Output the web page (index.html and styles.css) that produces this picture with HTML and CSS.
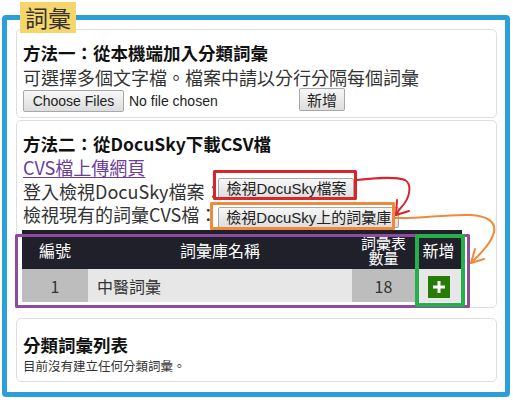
FILE: index.html
```html
<!DOCTYPE html>
<html lang="zh-Hant">
<head>
<meta charset="utf-8">
<title>詞彙</title>
<link rel="stylesheet" href="styles.css">
</head>
<body>
<section class="vocab">
  <h2 class="vocab-label">詞彙</h2>

  <div class="panel panel-local">
    <h3 class="panel-title">方法一：從本機端加入分類詞彙</h3>
    <p class="panel-text">可選擇多個文字檔。檔案中請以分行分隔每個詞彙</p>
    <div class="file-row">
      <span class="file-input">
        <button class="btn btn-file" type="button">Choose Files</button>
        <span class="file-name">No file chosen</span>
      </span>
      <button class="btn btn-add" type="button">新增</button>
    </div>
  </div>

  <div class="panel panel-docusky">
    <h3 class="panel-title">方法二：從DocuSky下載CSV檔</h3>
    <a class="link" href="#">CVS檔上傳網頁</a>
    <div class="action-row row-login">
      <span class="action-label">登入檢視DocuSky檔案：</span>
      <button class="btn btn-small" type="button">檢視DocuSky檔案</button>
    </div>
    <div class="action-row row-view">
      <span class="action-label">檢視現有的詞彙CVS檔：</span>
      <button class="btn btn-small" type="button">檢視DocuSky上的詞彙庫</button>
    </div>
    <table class="lib-table">
      <colgroup>
        <col class="c-num"><col class="c-name"><col class="c-count"><col class="c-add">
      </colgroup>
      <thead>
        <tr>
          <th>編號</th>
          <th>詞彙庫名稱</th>
          <th class="th-count">詞彙表數量</th>
          <th>新增</th>
        </tr>
      </thead>
      <tbody>
        <tr>
          <td class="cell-dark cell-center">1</td>
          <td class="cell-light cell-name">中醫詞彙</td>
          <td class="cell-dark cell-center">18</td>
          <td class="cell-light cell-center">
            <button class="btn-plus" type="button" aria-label="新增">
              <svg width="12" height="12" viewBox="0 0 12 12"><rect x="4.5" y="0" width="3" height="12" fill="#fff"/><rect x="0" y="4.5" width="12" height="3" fill="#fff"/></svg>
            </button>
          </td>
        </tr>
      </tbody>
    </table>
  </div>

  <div class="panel panel-list">
    <h3 class="panel-title">分類詞彙列表</h3>
    <p class="panel-note">目前沒有建立任何分類詞彙。</p>
  </div>
</section>

<svg class="annotations" width="513" height="400" viewBox="0 0 513 400" aria-hidden="true">
  <g fill="none" stroke-linecap="round" stroke-linejoin="round">
    <rect x="214.5" y="171.5" width="141" height="27" stroke="#d9252c" stroke-width="3"/>
    <rect x="211.5" y="203.5" width="182" height="25" stroke="#f08a3a" stroke-width="3"/>
    <rect x="16.5" y="235.5" width="452" height="71" stroke="#8e4c9e" stroke-width="3"/>
    <rect x="417" y="236" width="46" height="69" stroke="#25b04b" stroke-width="4"/>
    <path d="M357 180 C 375 178, 395 176, 405 180 C 412 184, 410 196, 404 204 C 400 209, 397 212, 396 215" stroke="#d9252c" stroke-width="2"/>
    <path d="M397 200 L396 215 L409 211" stroke="#d9252c" stroke-width="2"/>
    <path d="M395 218 C 420 219, 445 214, 470 215 C 488 216, 496 222, 494 232 C 491 244, 480 254, 471 263" stroke="#f08a3a" stroke-width="2"/>
    <path d="M475 249 L471 263 L484 259" stroke="#f08a3a" stroke-width="2"/>
  </g>
</svg>
</body>
</html>
```

FILE: styles.css
```css
* { box-sizing: border-box; }

html, body {
  margin: 0;
  padding: 0;
}

body {
  position: relative;
  width: 513px;
  height: 400px;
  overflow: hidden;
  background: #fff;
  color: #333;
  font-family: "Noto Sans CJK TC", sans-serif;
  font-size: 18px;
}

.vocab {
  position: relative;
  margin: 15px 3px 0 2px;
  border: 5px solid #2b9fd7;
  border-radius: 4px;
  padding: 9px 8px 10px 9px;
}

.vocab-label {
  position: absolute;
  top: -18px;
  left: 13px;
  margin: 0;
  padding: 0 5px;
  background: #f6d56b;
  color: #333;
  font-size: 23px;
  font-weight: normal;
  line-height: 31px;
}

.panel {
  border: 1px solid #dedede;
  border-radius: 5px;
  padding: 10px 6px 5px;
}

.panel-docusky { margin-top: 2px; }

.panel-list {
  margin-top: 10px;
  padding: 13px 6px 6px;
}

.panel-title {
  margin: 0;
  color: #111;
  font-size: 17.5px;
  font-weight: bold;
  line-height: 25px;
}

.panel-text {
  margin: 0;
  line-height: 25px;
}

.panel-note {
  margin: 0;
  font-size: 12.5px;
  line-height: 18px;
}

.file-row {
  display: flex;
  align-items: center;
  height: 22px;
}

.file-input {
  display: flex;
  align-items: center;
  width: 276px;
}

.file-name {
  margin-left: 5px;
  color: #222;
  font-family: "Liberation Sans", sans-serif;
  font-size: 14px;
}

.btn {
  border: 1px solid #a8a8a8;
  border-radius: 2px;
  background: linear-gradient(#f7f7f7, #dddddd);
  color: #222;
  padding: 0;
  margin: 0;
}

.btn-file {
  width: 101px;
  height: 22px;
  font-family: "Liberation Sans", sans-serif;
  font-size: 14px;
}

.btn-add {
  width: 46px;
  height: 23px;
  margin-top: -3px;
  font-family: "Noto Sans CJK TC", sans-serif;
  font-size: 15px;
  line-height: 20px;
}

.link {
  display: block;
  color: #6a3d9a;
  line-height: 22px;
  text-decoration: underline;
  text-underline-offset: 2px;
}

.action-row {
  display: flex;
}

.action-label { white-space: nowrap; }

.row-login {
  height: 27px;
  align-items: flex-start;
}

.row-login .action-label { line-height: 27px; }

.row-view {
  height: 25px;
  align-items: center;
}

.row-view .action-label {
  align-self: flex-start;
  line-height: 18px;
}

.btn-small {
  height: 21px;
  padding: 0 7px;
  font-family: "Liberation Sans", "Noto Sans CJK TC", sans-serif;
  font-size: 15px;
  line-height: 19px;
}

.row-login .btn-small { margin-left: -4px; }
.row-view .btn-small { margin-left: 1px; }

.lib-table {
  width: 440px;
  margin-left: -1px;
  border-collapse: collapse;
  table-layout: fixed;
}

.c-num { width: 66px; }
.c-name { width: 264px; }
.c-count { width: 63px; }
.c-add { width: 47px; }

.lib-table th {
  height: 39px;
  padding: 0;
  background: #1f2029;
  color: #fff;
  font-size: 16px;
  font-weight: normal;
  line-height: 20px;
}

.lib-table .th-count {
  padding: 0 8px;
  font-size: 15px;
  line-height: 15px;
}

.lib-table td {
  height: 33px;
  padding: 0;
  color: #333;
  font-size: 16px;
}

.cell-dark { background: #bdbdbd; }
.cell-light { background: #e7e7e7; }
.cell-center { text-align: center; }
.lib-table .cell-name { padding-left: 9px; }

.btn-plus {
  display: inline-flex;
  align-items: center;
  justify-content: center;
  width: 22px;
  height: 22px;
  margin: 0;
  padding: 0;
  border: none;
  background: #267c06;
  vertical-align: middle;
}

.annotations {
  position: absolute;
  top: 0;
  left: 0;
  pointer-events: none;
}
```
